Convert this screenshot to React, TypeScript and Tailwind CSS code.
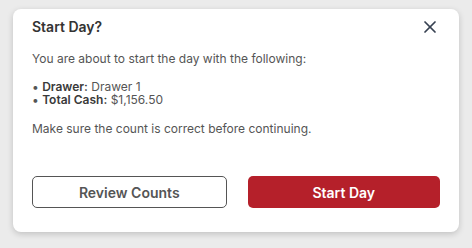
import { X } from "lucide-react";

export default function App() {
  return (
    <div className="flex h-[248px] w-[472px] items-start justify-center bg-[#ebebeb] pt-[9px] font-['Inter',sans-serif]">
      <div className="flex w-[446px] flex-col rounded-lg bg-white px-[19px] pb-[24px] pt-[8px] shadow-[0_2px_6px_rgba(0,0,0,0.18)]">
        <div className="flex h-[20px] items-center justify-between">
          <h2 className="text-[14px] font-semibold leading-[20px] text-[#333333]">Start Day?</h2>
          <button type="button" className="text-[#374151]">
            <X size={20} strokeWidth={2.1} />
          </button>
        </div>
        <p className="mt-[14px] text-[12px] leading-[16px] text-[#555555]">
          You are about to start the day with the following:
        </p>
        <ul className="mt-[13px] text-[12px] leading-[13px] text-[#555555]">
          <li>
            • <span className="font-semibold text-[#3a3a3a]">Drawer:</span> Drawer 1
          </li>
          <li>
            • <span className="font-semibold text-[#3a3a3a]">Total Cash:</span> $1,156.50
          </li>
        </ul>
        <p className="mt-[15px] text-[12px] leading-[16px] text-[#555555]">
          Make sure the count is correct before continuing.
        </p>
        <div className="mt-[39px] flex gap-[21px]">
          <button
            type="button"
            className="h-[32px] flex-1 rounded-[5px] border border-[#555555] text-[14px] font-semibold text-[#555555]"
          >
            Review Counts
          </button>
          <button
            type="button"
            className="h-[32px] flex-1 rounded-[5px] bg-[#b5202a] text-[14px] font-semibold text-white"
          >
            Start Day
          </button>
        </div>
      </div>
    </div>
  );
}
